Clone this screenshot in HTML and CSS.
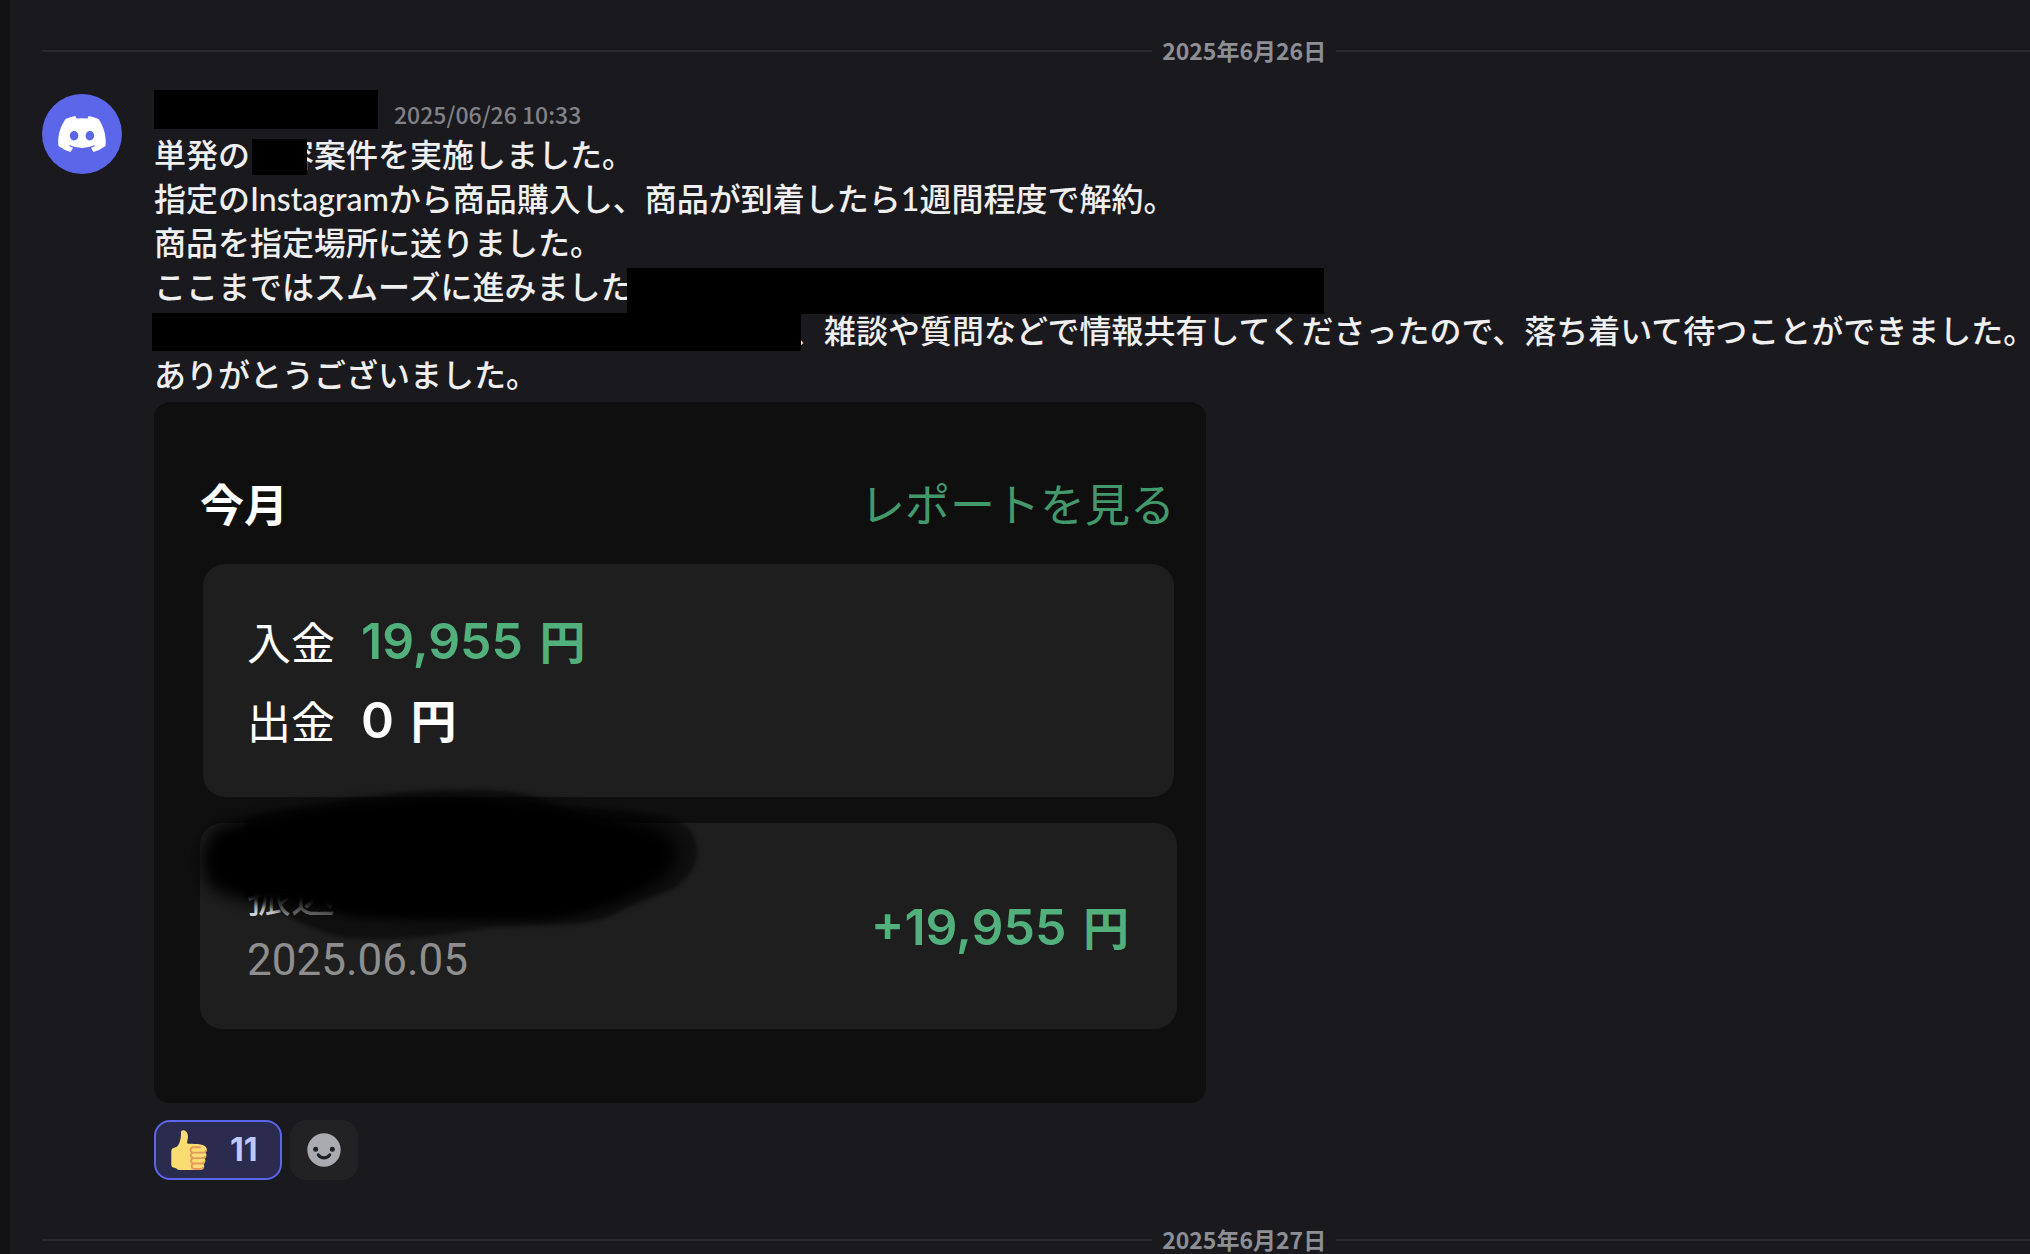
FILE: index.html
```html
<!DOCTYPE html>
<html lang="ja">
<head>
<meta charset="utf-8">
<meta name="viewport" content="width=device-width, initial-scale=1">
<title>チャット</title>
<link rel="stylesheet" href="styles.css">
</head>
<body>
<main class="chat">
  <div class="divider"><time class="day" datetime="2025-06-26">2025年6月26日</time></div>

  <article class="message">
    <div class="avatar">
      <svg viewBox="0 0 127.14 96.36" width="48" height="36" aria-hidden="true"><path fill="#fff" d="M107.7,8.07A105.15,105.15,0,0,0,81.47,0a72.06,72.06,0,0,0-3.36,6.83A97.68,97.68,0,0,0,49,6.83,72.37,72.37,0,0,0,45.64,0,105.89,105.89,0,0,0,19.39,8.09C2.79,32.65-1.71,56.6.54,80.21h0A105.73,105.73,0,0,0,32.71,96.36,77.7,77.7,0,0,0,39.6,85.25a68.42,68.42,0,0,1-10.85-5.18c.91-.66,1.8-1.34,2.66-2a75.57,75.57,0,0,0,64.32,0c.87.71,1.76,1.39,2.66,2a68.68,68.68,0,0,1-10.87,5.19,77,77,0,0,0,6.89,11.1A105.25,105.25,0,0,0,126.6,80.22h0C129.24,52.84,122.09,29.11,107.7,8.07ZM42.45,65.69C36.18,65.69,31,60,31,53s5-12.74,11.43-12.74S54,46,53.89,53,48.84,65.69,42.45,65.69Zm42.24,0C78.41,65.69,73.25,60,73.25,53s5-12.74,11.44-12.74S96.23,46,96.12,53,91.08,65.69,84.69,65.69Z"/></svg>
    </div>
    <div class="body">
      <header class="head">
        <span class="mask mask-name"></span>
        <time class="stamp" datetime="2025-06-26T10:33">2025/06/26 10:33</time>
      </header>

      <div class="text">
        <p class="line"><span>単発の</span><span class="mask mask-word"></span><span class="under-word">容</span><span>案件を実施しました。</span></p>
        <p class="line"><span>指定のInstagramから商品購入し、商品が到着したら1週間程度で解約。</span></p>
        <p class="line"><span>商品を指定場所に送りました。</span></p>
        <p class="line"><span>ここまではスムーズに進みました</span><span class="mask mask-tail"></span></p>
        <p class="line"><span class="mask mask-lead"></span><span class="under-lead">、</span><span>雑談や質問などで情報共有してくださったので、落ち着いて待つことができました。</span></p>
        <p class="line"><span>ありがとうございました。</span></p>
      </div>

      <section class="card">
        <div class="card-head">
          <h2 class="card-title">今月</h2>
          <a class="report" href="#report">レポートを見る</a>
        </div>
        <dl class="panel totals">
          <div class="total"><dt>入金</dt><dd class="amount green">19,955 <span class="yen">円</span></dd></div>
          <div class="total"><dt>出金</dt><dd class="amount">0 <span class="yen">円</span></dd></div>
        </dl>
        <div class="panel entry">
          <div class="entry-info">
            <span class="entry-name">振込</span>
            <time class="entry-date" datetime="2025-06-05">2025.06.05</time>
          </div>
          <span class="amount green">+19,955 <span class="yen">円</span></span>
          <svg class="scribble" viewBox="0 0 520 160" width="520" height="160" aria-hidden="true">
            <defs>
              <filter id="soft" x="-10%" y="-20%" width="120%" height="140%"><feGaussianBlur stdDeviation="8"/></filter>
              <filter id="edge" x="-10%" y="-20%" width="120%" height="140%"><feGaussianBlur stdDeviation="2"/></filter>
              <filter id="core" x="-10%" y="-20%" width="120%" height="140%"><feGaussianBlur stdDeviation="4"/></filter>
            </defs>
            <path filter="url(#edge)" fill="#000" fill-opacity=".5" d="M60 32Q100 22 150 16Q230 2 300 4Q350 6 370 20Q440 24 480 30Q510 38 512 62Q514 84 490 102Q465 112 440 122Q420 136 390 138Q340 138 300 142Q230 156 160 152Q120 142 96 126L60 112Z"/>
            <path filter="url(#soft)" fill="#000" d="M34 40Q100 26 160 20Q270 8 370 22Q410 32 460 38Q494 48 492 70Q490 92 450 108Q400 132 340 132Q280 130 230 128Q160 122 110 118Q50 120 22 98Q8 62 34 40Z"/>
            <path fill="#000" filter="url(#core)" d="M60 44Q160 20 260 16Q370 18 440 44Q470 60 460 90Q430 122 360 130Q260 134 170 130L150 124L116 114L62 110Q36 74 60 44Z"/>
          </svg>
        </div>
      </section>

      <div class="reactions">
        <button class="reaction mine" type="button" aria-pressed="true" aria-label="いいね 11">
          <svg viewBox="0 0 36 36" width="40" height="40" aria-hidden="true"><path fill="#FADC73" d="M34.956 17.916c0-.503-.12-.975-.321-1.404-1.341-4.326-7.619-4.01-16.549-4.221-1.493-.035-.639-1.798-.115-5.668.341-2.517-1.282-6.382-4.01-6.382-4.498 0-.171 3.548-4.148 12.322-2.125 4.688-6.875 2.062-6.875 6.771v10.719c0 1.833.18 3.595 2.758 3.885C8.195 34.219 7.633 36 11.238 36h18.044c1.838 0 3.333-1.496 3.333-3.334 0-.762-.267-1.456-.698-2.018 1.02-.571 1.72-1.649 1.72-2.899 0-.76-.266-1.454-.696-2.015 1.023-.57 1.725-1.649 1.725-2.901 0-.909-.368-1.733-.961-2.336.757-.611 1.251-1.535 1.251-2.581z"/><path fill="#E39A5B" d="M23.02 21.249h8.604c1.17 0 2.268-.626 2.866-1.633.246-.415.109-.952-.307-1.199-.415-.247-.952-.108-1.199.307-.283.479-.806.775-1.361.775h-8.81c-.873 0-1.583-.71-1.583-1.583s.71-1.583 1.583-1.583H28.7c.483 0 .875-.392.875-.875s-.392-.875-.875-.875h-5.888c-1.838 0-3.333 1.495-3.333 3.333 0 1.025.475 1.932 1.205 2.544-.615.605-.998 1.445-.998 2.373 0 1.028.478 1.938 1.212 2.549-.611.604-.99 1.441-.99 2.367 0 1.12.559 2.108 1.409 2.713-.524.589-.852 1.356-.852 2.204 0 1.838 1.495 3.333 3.333 3.333h5.484c1.17 0 2.269-.625 2.867-1.632.247-.415.11-.952-.305-1.199-.416-.245-.953-.11-1.199.305-.285.479-.808.776-1.363.776h-5.484c-.873 0-1.583-.71-1.583-1.583s.71-1.583 1.583-1.583h6.506c1.17 0 2.27-.626 2.867-1.633.247-.416.11-.953-.305-1.199-.419-.251-.954-.11-1.199.305-.289.487-.799.777-1.363.777h-7.063c-.873 0-1.583-.711-1.583-1.584s.71-1.583 1.583-1.583h8.091c1.17 0 2.269-.625 2.867-1.632.247-.415.11-.952-.305-1.199-.417-.246-.953-.11-1.199.305-.289.486-.799.776-1.363.776H23.02c-.873 0-1.583-.71-1.583-1.583s.71-1.584 1.583-1.584z"/></svg>
          <span class="count">11</span>
        </button>
        <button class="reaction add" type="button" aria-label="リアクションを付ける">
          <svg viewBox="0 0 24 24" width="40" height="40" aria-hidden="true"><circle cx="12" cy="12" r="10" fill="#aaaab1"/><circle cx="7" cy="11.6" r="1.5" fill="#222225"/><circle cx="17" cy="11.6" r="1.5" fill="#222225"/><path d="M8.6 14.9a4.1 4.1 0 0 0 6.8 0" fill="none" stroke="#222225" stroke-width="1.9" stroke-linecap="round"/></svg>
        </button>
      </div>
    </div>
  </article>

  <div class="divider"><time class="day" datetime="2025-06-27">2025年6月27日</time></div>
</main>
</body>
</html>
```
FILE: styles.css
```css
* {
  box-sizing: border-box;
}

body {
  margin: 0;
  background: #1a1a1e;
  color: #efeff0;
  font-family: "Noto Sans CJK JP", sans-serif;
  overflow: hidden;
}

h2, p, dl, dd {
  margin: 0;
}

svg {
  display: block;
  flex: none;
}

.chat {
  min-height: 100vh;
  padding: 37px 0 0 32px;
  border-left: 10px solid #121214;
}

.divider {
  display: flex;
  align-items: center;
  gap: 10px;
  height: 28px;
  color: #8e8e95;
  font-size: 23px;
  font-weight: 700;
  line-height: 28px;
}

.divider::before,
.divider::after {
  content: "";
  height: 2px;
  background: #29292d;
}

.divider::before {
  flex: 8;
}

.divider::after {
  flex: 5;
}

.day {
  padding-bottom: 2px;
}

.message {
  display: flex;
  gap: 32px;
  padding: 25px 0 46px;
}

.avatar {
  display: flex;
  align-items: center;
  justify-content: center;
  flex: none;
  width: 80px;
  height: 80px;
  margin-top: 4px;
  border-radius: 50%;
  background: #5b66ea;
}

.body {
  flex: 1;
  min-width: 0;
}

.head {
  display: flex;
  align-items: center;
  gap: 16px;
  height: 39px;
}

.mask {
  position: relative;
  z-index: 1;
  flex: none;
  background: #000;
}

.mask-name {
  width: 224px;
  height: 39px;
}

.stamp {
  padding-top: 8px;
  color: #818188;
  font-size: 23px;
  font-weight: 500;
  line-height: 28px;
}

.text {
  padding: 4px 0 5px;
  font-family: Lato, "Noto Sans CJK JP", sans-serif;
  font-size: 32px;
  font-weight: 500;
  line-height: 44px;
}

.line {
  display: flex;
  align-items: flex-end;
  height: 44px;
  white-space: nowrap;
}

.mask-word {
  width: 55px;
  height: 36px;
  margin: 0 0 2px 2px;
}

.under-word {
  margin-left: -25px;
}

.mask-tail {
  width: 697px;
  height: 46px;
  margin: 0 0 -5px -5px;
}

.mask-lead {
  width: 649px;
  height: 38px;
  margin: 0 0 2px -2px;
}

.under-lead {
  margin-left: -9px;
}

.card {
  max-width: 1052px;
  padding: 74px 29px;
  border-radius: 16px;
  background: #0f0f0f;
}

.card-head {
  display: flex;
  align-items: center;
  justify-content: space-between;
  padding: 0 2px 34px 17px;
  line-height: 54px;
}

.card-title {
  color: #fff;
  font-size: 44px;
  font-weight: 700;
}

.report {
  color: #42996c;
  font-size: 45px;
  text-decoration: none;
}

.panel {
  border-radius: 22px;
  background: #1e1e1e;
}

.totals {
  display: grid;
  gap: 19px;
  margin: 0 3px 0 20px;
  padding: 47px 44px;
  color: #fff;
}

.total {
  display: flex;
  align-items: center;
  gap: 26px;
  height: 60px;
  font-size: 44px;
  line-height: 56px;
}

.amount {
  font-family: Inter, "Noto Sans CJK JP", sans-serif;
  font-size: 50px;
  font-weight: 600;
  line-height: 60px;
}

.yen {
  margin-left: 4px;
  font-size: 46px;
  font-weight: 700;
  line-height: 40px;
}

.green {
  color: #52b07c;
}

.entry {
  position: relative;
  display: flex;
  align-items: center;
  justify-content: space-between;
  margin: 26px 0 0 17px;
  padding: 41px 48px 40px 47px;
}

.entry-info {
  display: grid;
  gap: 9px;
  line-height: 58px;
}

.entry-name {
  color: #ddd;
  font-size: 44px;
}

.entry-date {
  color: #8e8e8e;
  font-family: Roboto, sans-serif;
  font-size: 44px;
}

.scribble {
  position: absolute;
  top: -37px;
  left: -15px;
}

.reactions {
  display: flex;
  gap: 8px;
  padding-top: 17px;
}

.reaction {
  display: flex;
  align-items: center;
  height: 60px;
  border: 2px solid transparent;
  border-radius: 16px;
  font-family: inherit;
}

.mine {
  gap: 22px;
  padding: 0 22px 0 12px;
  border-color: #5b66ea;
  background: #2a2b4d;
}

.count {
  color: #bfc9ff;
  font-family: Inter, sans-serif;
  font-size: 32px;
  font-weight: 700;
  line-height: 40px;
}

.add {
  padding: 0 12px;
  background: #222225;
}
```
